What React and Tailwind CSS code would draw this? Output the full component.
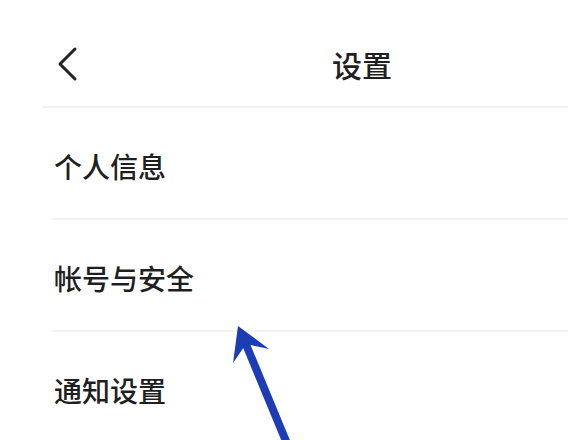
import React from "react";

const items = ["个人信息", "帐号与安全", "通知设置"];

const App = () => {
  return (
    <div
      className="relative w-[568px] h-[440px] overflow-hidden bg-white text-[#1f1f1f]"
      style={{ fontFamily: '"Noto Sans CJK SC", "Noto Sans", sans-serif' }}
    >
      <div className="w-[724px]">
        {/* header */}
        <div className="flex items-center h-[106px] pt-[22px]">
          <div className="w-[80px] pl-[56px]">
            <svg width="24" height="36" viewBox="0 0 24 36" fill="none">
              <path
                d="M19 3 L4 18 L19 33"
                stroke="#222"
                strokeWidth="3"
                strokeLinecap="round"
                strokeLinejoin="round"
              />
            </svg>
          </div>
          <div className="flex-1 text-center text-[30px] font-medium leading-none">设置</div>
          <div className="w-[80px]" />
        </div>
        <div className="ml-[42px] h-[2px] bg-[#f3f3f3]" />

        {/* list */}
        {items.map((label) => (
          <div
            key={label}
            className="ml-[52px] h-[112px] flex items-center pt-[6px] border-b-2 border-[#f3f3f3]"
          >
            <span className="pl-[2px] text-[28px] font-medium leading-none">{label}</span>
          </div>
        ))}
      </div>

      {/* annotation arrow */}
      <svg
        className="absolute inset-0 pointer-events-none"
        width="568"
        height="440"
        viewBox="0 0 568 440"
      >
        <line x1="288" y1="446" x2="245" y2="342" stroke="#1d3db5" strokeWidth="8" />
        <polygon points="238,326 269,349 246,344 233,363" fill="#1d3db5" />
      </svg>
    </div>
  );
};

export default App;
